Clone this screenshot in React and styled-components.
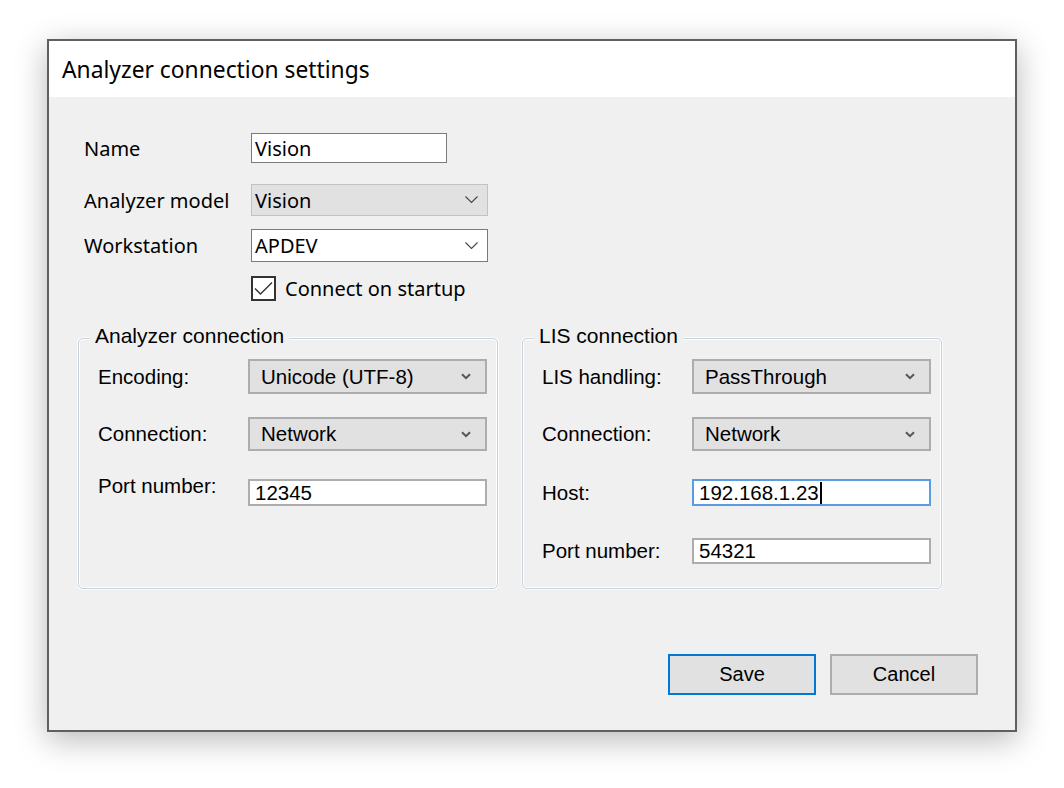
import React from 'react';
import styled, { createGlobalStyle } from 'styled-components';

const GlobalStyle = createGlobalStyle`
  html, body {
    margin: 0;
    padding: 0;
    background: #ffffff;
  }
  body {
    font-family: "Noto Sans", "Open Sans", sans-serif;
    color: #000;
  }
`;

const Page = styled.div`
  width: 1064px;
  height: 788px;
  padding: 39px 0 0 47px;
  box-sizing: border-box;
`;

const Window = styled.div`
  width: 970px;
  height: 693px;
  box-sizing: border-box;
  border: 2px solid #5f5f5f;
  background: #f0f0f0;
  box-shadow: 0 8px 30px rgba(0, 0, 0, 0.28);
  display: flex;
  flex-direction: column;
`;

const TitleBar = styled.div`
  height: 56px;
  flex: none;
  background: #fff;
  display: flex;
  align-items: center;
  padding-left: 13px;
  font-family: "Noto Sans", sans-serif;
  font-size: 22.8px;
`;

const Body = styled.div`
  flex: 1;
  padding: 36px 37px 0 29px;
  display: flex;
  flex-direction: column;
`;

const TopForm = styled.div`
  padding-left: 6px;
  display: flex;
  flex-direction: column;
`;

const TopRow = styled.div`
  display: flex;
  align-items: center;
  margin-top: ${p => p.$top || 0}px;
`;

const TopLabel = styled.div`
  width: 167px;
  flex: none;
  font-size: 20px;
`;

const TextBox = styled.div`
  width: ${p => p.$w}px;
  height: ${p => p.$h}px;
  box-sizing: border-box;
  background: #fff;
  border: 1px solid #7a7a7a;
  display: flex;
  align-items: center;
  padding-left: 3px;
  font-size: 20px;
`;

const Combo = styled.div`
  width: 237px;
  height: ${p => p.$h}px;
  box-sizing: border-box;
  background: ${p => (p.$locked ? '#e1e1e1' : '#fff')};
  border: 1px solid ${p => (p.$locked ? '#c2c2c2' : '#7a7a7a')};
  display: flex;
  align-items: center;
  justify-content: space-between;
  padding: 0 9px 0 3px;
  font-size: 20px;
`;

const CheckRow = styled.label`
  display: flex;
  align-items: center;
  gap: 9px;
  margin-left: 167px;
  margin-top: 13px;
  font-size: 20px;
`;

const CheckBox = styled.span`
  width: 25px;
  height: 25px;
  box-sizing: border-box;
  border: 2px solid #333;
  background: #fff;
  display: flex;
  align-items: center;
  justify-content: center;
`;

const Groups = styled.div`
  display: flex;
  gap: 24px;
  margin-top: 36px;
`;

const Group = styled.div`
  position: relative;
  width: 420px;
  box-sizing: border-box;
  border: 1px solid #c9d2db;
  border-radius: 5px;
  box-shadow: inset 0 0 0 1px #fff, 0 0 0 1px #fbfcfd;
  padding: 20px 10px 24px 19px;
  font-family: "Liberation Sans", Arial, sans-serif;
  font-size: 20.5px;
`;

const Legend = styled.span`
  position: absolute;
  top: -14px;
  left: 11px;
  padding: 0 5px;
  line-height: 22px;
  font-size: 21px;
  background: #f0f0f0;
`;

const Field = styled.div`
  display: flex;
  align-items: ${p => (p.$top ? 'flex-start' : 'center')};
  margin-top: ${p => p.$gap || 0}px;
`;

const FieldLabel = styled.div`
  width: 150px;
  flex: none;
  margin-top: ${p => (p.$top ? -5 : 0)}px;
`;

const ClassicCombo = styled.div`
  width: 239px;
  height: ${p => p.$h}px;
  box-sizing: border-box;
  background: #e1e1e1;
  border: 2px solid #adadad;
  display: flex;
  align-items: center;
  justify-content: space-between;
  padding: 0 14px 0 11px;
`;

const ClassicInput = styled.div`
  width: 239px;
  height: ${p => p.$h}px;
  box-sizing: border-box;
  background: #fff;
  border: 2px solid ${p => (p.$focus ? '#5a9de3' : '#adadad')};
  display: flex;
  align-items: center;
  padding-left: 5px;
`;

const Caret = styled.span`
  display: inline-block;
  width: 2px;
  height: 22px;
  margin-left: 1px;
  background: #000;
`;

const Buttons = styled.div`
  display: flex;
  justify-content: flex-end;
  gap: 14px;
  margin-top: 65px;
`;

const Button = styled.button`
  width: 148px;
  height: 41px;
  box-sizing: border-box;
  background: #e1e1e1;
  border: 2px solid ${p => (p.$primary ? '#0078d7' : '#adadad')};
  font-family: "Liberation Sans", Arial, sans-serif;
  font-size: 20px;
  color: #000;
  padding: 0;
`;

const ThinChevron = () => (
  <svg width="13" height="8" viewBox="0 0 13 8">
    <polyline points="0.5,0.5 6.5,6.5 12.5,0.5" fill="none" stroke="#444" strokeWidth="1.1" />
  </svg>
);

const BoldChevron = () => (
  <svg width="10" height="7" viewBox="0 0 10 7">
    <polyline points="1,1.2 5,5.2 9,1.2" fill="none" stroke="#555" strokeWidth="2" />
  </svg>
);

const Check = () => (
  <svg width="19" height="15" viewBox="0 0 19 15">
    <polyline points="1,7.5 6.5,13 18,1.5" fill="none" stroke="#333" strokeWidth="1.4" />
  </svg>
);

export default function App() {
  return (
    <Page>
      <GlobalStyle />
      <Window>
        <TitleBar>Analyzer connection settings</TitleBar>
        <Body>
          <TopForm>
            <TopRow>
              <TopLabel>Name</TopLabel>
              <TextBox $w={196} $h={30}>Vision</TextBox>
            </TopRow>
            <TopRow $top={21}>
              <TopLabel>Analyzer model</TopLabel>
              <Combo $h={32} $locked>
                <span>Vision</span>
                <ThinChevron />
              </Combo>
            </TopRow>
            <TopRow $top={13}>
              <TopLabel>Workstation</TopLabel>
              <Combo $h={33}>
                <span>APDEV</span>
                <ThinChevron />
              </Combo>
            </TopRow>
            <CheckRow>
              <CheckBox>
                <Check />
              </CheckBox>
              Connect on startup
            </CheckRow>
          </TopForm>

          <Groups>
            <Group>
              <Legend>Analyzer connection</Legend>
              <Field>
                <FieldLabel>Encoding:</FieldLabel>
                <ClassicCombo $h={35}>
                  <span>Unicode (UTF-8)</span>
                  <BoldChevron />
                </ClassicCombo>
              </Field>
              <Field $gap={23}>
                <FieldLabel>Connection:</FieldLabel>
                <ClassicCombo $h={34}>
                  <span>Network</span>
                  <BoldChevron />
                </ClassicCombo>
              </Field>
              <Field $gap={28} $top>
                <FieldLabel $top>Port number:</FieldLabel>
                <ClassicInput $h={27}>12345</ClassicInput>
              </Field>
            </Group>

            <Group>
              <Legend>LIS connection</Legend>
              <Field>
                <FieldLabel>LIS handling:</FieldLabel>
                <ClassicCombo $h={35}>
                  <span>PassThrough</span>
                  <BoldChevron />
                </ClassicCombo>
              </Field>
              <Field $gap={23}>
                <FieldLabel>Connection:</FieldLabel>
                <ClassicCombo $h={34}>
                  <span>Network</span>
                  <BoldChevron />
                </ClassicCombo>
              </Field>
              <Field $gap={28}>
                <FieldLabel>Host:</FieldLabel>
                <ClassicInput $h={27} $focus>
                  192.168.1.23
                  <Caret />
                </ClassicInput>
              </Field>
              <Field $gap={32}>
                <FieldLabel>Port number:</FieldLabel>
                <ClassicInput $h={26}>54321</ClassicInput>
              </Field>
            </Group>
          </Groups>

          <Buttons>
            <Button $primary>Save</Button>
            <Button>Cancel</Button>
          </Buttons>
        </Body>
      </Window>
    </Page>
  );
}
